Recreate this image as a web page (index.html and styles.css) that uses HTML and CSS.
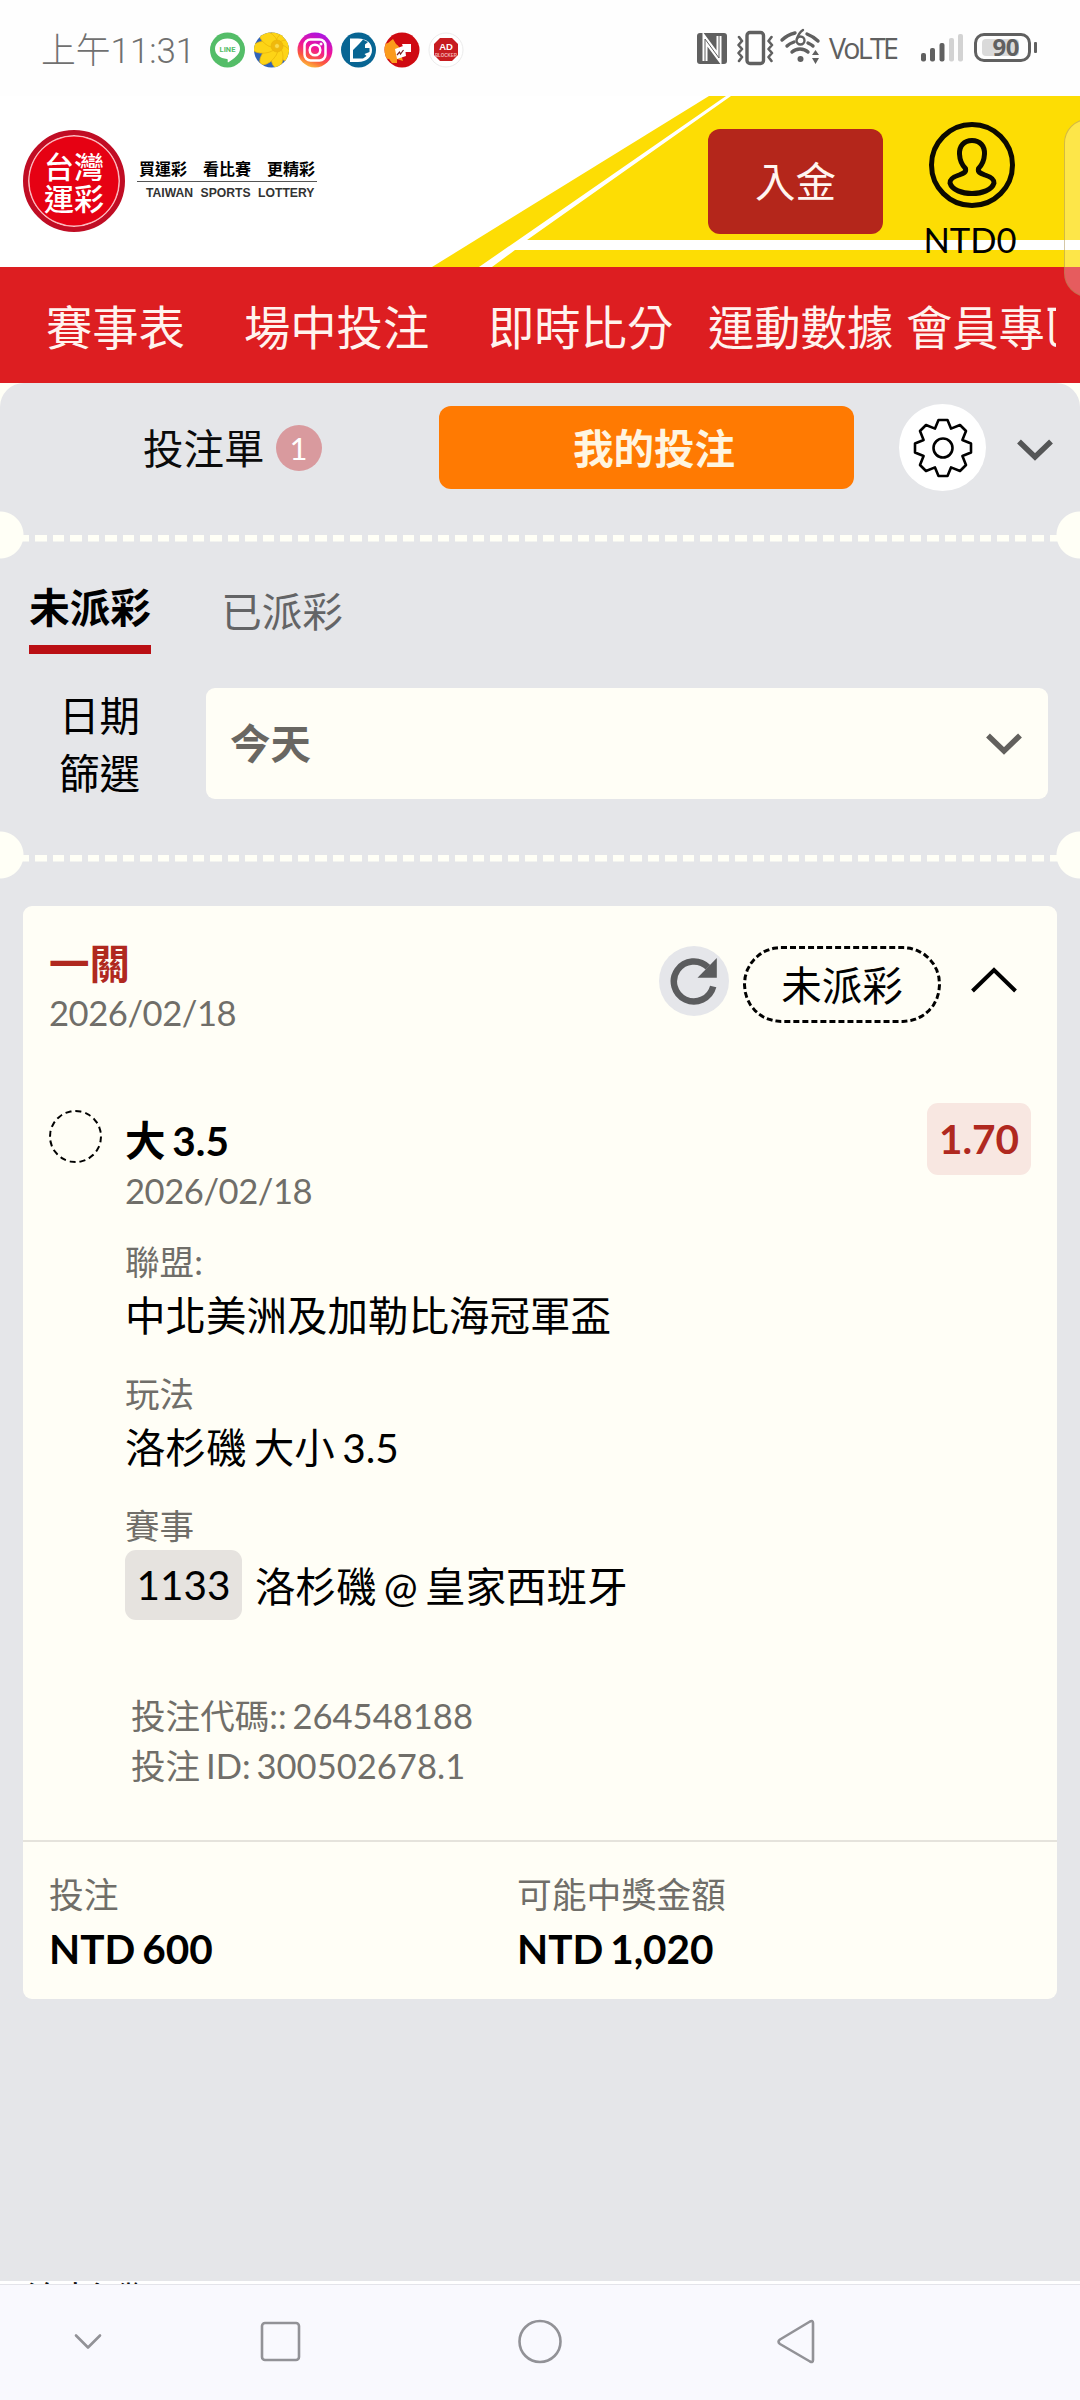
FILE: index.html
```html
<!DOCTYPE html>
<html lang="zh-Hant">
<head>
<meta charset="utf-8">
<title>台灣運彩</title>
<link rel="stylesheet" href="styles.css">
</head>
<body>
<div class="screen">
  <div class="status">
    <div class="clock">上午11:31</div>
    <svg class="apps" width="238" height="36" viewBox="0 0 238 36">
      <defs>
        <linearGradient id="ig" x1="0.7" y1="0" x2="0.3" y2="1"><stop offset="0" stop-color="#a516e8"/><stop offset=".45" stop-color="#f0149a"/><stop offset=".75" stop-color="#fb5a3c"/><stop offset="1" stop-color="#fdc43a"/></linearGradient>
        <clipPath id="c2"><circle cx="61.500" cy="18" r="17.500"/></clipPath>
        <clipPath id="c5"><circle cx="192" cy="18" r="17.500"/></clipPath>
      </defs>
      <circle cx="17.500" cy="18" r="17.500" fill="#54bd68"/>
      <path d="M17.500 6.500c7 0 12.500 4.500 12.500 10.200 0 5.500-6 10-12 13.800-.8-1.500.5-3.200-1-3.600C10 26.400 5 22.300 5 16.700 5 11 10.500 6.500 17.500 6.500z" fill="#fff"/>
      <text class="line-label" x="17.500" y="19.800" text-anchor="middle">LINE</text>
      <g clip-path="url(#c2)">
        <rect x="43" width="37" height="36" fill="#3263b8"/>
        <g fill="#fdd416" stroke="#e9b50c" stroke-width=".7" transform="translate(67 14)">
          <ellipse cx="0" cy="-10" rx="6" ry="10"/><ellipse cx="0" cy="-10" rx="6" ry="10" transform="rotate(45)"/><ellipse cx="0" cy="-10" rx="6" ry="10" transform="rotate(90)"/><ellipse cx="0" cy="-10" rx="6" ry="10" transform="rotate(135)"/><ellipse cx="0" cy="-11" rx="6" ry="11" transform="rotate(180)"/><ellipse cx="0" cy="-12" rx="6" ry="12" transform="rotate(222)"/><ellipse cx="0" cy="-13" rx="6" ry="12" transform="rotate(265)"/><ellipse cx="0" cy="-11" rx="6" ry="11" transform="rotate(310)"/>
          <circle r="6" fill="#f0b90c"/><circle r="2.500" fill="#fadb50"/>
        </g>
      </g>
      <circle cx="105" cy="18" r="17.500" fill="url(#ig)"/>
      <g fill="none" stroke="#fff" stroke-width="2.500"><rect x="94.500" y="7.500" width="21" height="21" rx="6"/><circle cx="105" cy="18" r="5.300"/></g>
      <circle cx="111" cy="12" r="1.500" fill="#fff"/>
      <circle cx="148.500" cy="18" r="17.500" fill="#086593"/>
      <path fill-rule="evenodd" d="M140 6.500h8c9 0 14 5 14 11.500s-5 12-14 12h-8zM143 18v8.500h10l3.500-2.500-2-2 5-2v-4h-4.500v-3.500l3-2.500-5-2.500-4 4.500z" fill="#fff"/>
      <circle cx="192" cy="18" r="17.500" fill="#cf0a12"/>
      <g clip-path="url(#c5)">
        <path d="M174 12l4-1 5-4 3 5c3 2 4 4 4 7l3 10-6-2v4h-5l-3-4-6-1z" fill="#fb9b1c"/>
        <path d="M185 17l8-3 2 2 1 8-9 3zM192 12h9v8h-6z" fill="#fff"/>
        <path d="M187 23l2.500-3 1 2 3-4" stroke="#722" fill="none" stroke-width="1.200"/>
      </g>
    </svg>
    <svg class="adicon" width="36" height="36" viewBox="0 0 36 36">
      <circle cx="18" cy="18" r="17" fill="#fff" stroke="#ececec" stroke-width="1"/>
      <path d="M12 6h12l6 6v11l-6 6H12l-6-6V12z" fill="#c71c20"/>
      <text class="ad-label" x="18" y="18" text-anchor="middle">AD</text>
      <text class="ad-sub" x="18" y="25" text-anchor="middle">BLOCKER</text>
    </svg>
    <svg class="sysicons" width="128" height="40" viewBox="0 0 128 40">
      <rect x="1" y="5" width="30" height="31" rx="3" fill="#606060"/>
      <path d="M9 33V11l14 19V8" stroke="#fff" stroke-width="5" fill="none"/>
      <path d="M9 33V11l14 19V8" stroke="#606060" stroke-width="1" fill="none"/>
      <g fill="none" stroke="#606060" stroke-width="3.400" stroke-linecap="round" stroke-linejoin="round">
        <rect x="51" y="4.500" width="16.500" height="31" rx="3"/>
        <path stroke-width="2.600" d="M43 9l3 4-3.500 4 3.500 4-3.500 4 3.500 4-3 4M75.500 9l-3 4 3.500 4-3.500 4 3.500 4-3.500 4 3 4"/>
        <path d="M86 12c4-4 9-6 13-7M111 6c5 2 8 4 11 7M91 18c2-2 4-3 7-4M112 15c2 1 4 2 5 3M96 24c4-4 12-4 16 0"/>
        <path stroke-width="2.400" d="M107 2c-3 2-5 5-6 9"/><circle cx="104.500" cy="12.500" r="4" stroke-width="2.400"/>
      </g>
      <circle cx="104.500" cy="31" r="3" fill="#606060"/>
      <path d="M116 27l3.500-5 3.500 5zM116 30h7l-3.500 6z" fill="#606060"/>
    </svg>
    <div class="volte">VoLTE</div>
    <svg class="signal" width="44" height="30" viewBox="0 0 44 30">
      <g fill="#606060"><rect x="0" y="20" width="5" height="8.500" rx="2"/><rect x="9" y="15" width="5" height="13.500" rx="2"/><rect x="18.500" y="10" width="5" height="18.500" rx="2"/></g>
      <g fill="#d3d3d3"><rect x="28" y="5" width="5" height="23.500" rx="2"/><rect x="37" y="1" width="5" height="27.500" rx="2"/></g>
    </svg>
    <div class="battery"><span>90</span></div>
    <i class="battery-cap"></i>
  </div>

  <header class="header">
    <svg class="stripes" width="660" height="171" viewBox="0 0 660 171">
      <path d="M12 171L289 0H660V171z" fill="#fddd04"/>
      <path d="M59 171L306 0h5L107 144H660v10H95L72 171z" fill="#fff"/>
    </svg>
    <div class="brand">
      <div class="seal"><span>台灣</span><span>運彩</span></div>
      <div class="tagline">
        <div class="slogan"><span>買運彩</span><span>看比賽</span><span>更精彩</span></div>
        <div class="english">TAIWAN SPORTS LOTTERY</div>
      </div>
    </div>
    <button class="deposit">入金</button>
    <div class="account">
      <svg width="90" height="90" viewBox="-45 -45 90 90" fill="none" stroke="#0c0a00" stroke-width="5">
        <circle r="40.500"/>
        <path stroke-linejoin="round" d="M0-24.500C8-24.500 12.800-19 12.500-11 12.200-4 10 0 6.500 3.500 5.500 7.500 9 8.500 13 10 19 12 22.500 14.500 22 18 20 25 10 28.500 0 28.500S-20 25-22 18C-22.500 14.500-19 12-13 10-9 8.500-5.500 7.500-6.500 3.500-10 0-12.200-4-12.500-11-12.800-19-8-24.500 0-24.500z"/>
      </svg>
      <div class="balance">NTD0</div>
    </div>
  </header>

  <nav class="nav">
    <span class="w198">賽事表</span><span class="w244">場中投注</span><span class="w220">即時比分</span><span class="w198">運動數據</span><span>會員專區</span>
  </nav>
  <i class="edge-handle"></i>

  <main class="panel-wrap">
    <div class="panel">
      <div class="topbar">
        <div class="slip">投注單<b class="badge">1</b></div>
        <button class="mine">我的投注</button>
        <div class="gear">
          <svg width="62" height="62" viewBox="-31 -31 62 62" fill="none" stroke="#000" stroke-width="2.600" stroke-linejoin="round">
            <path d="M-4.500-28H4.500L8-19.400 17-23 23-17 19.400-8 28-4.500V4.500L19.400 8 23 17 17 23 8 19.400 4.500 28H-4.500L-8 19.400-17 23-23 17-19.400 8-28 4.500V-4.500L-19.400-8-23-17-17-23-8-19.400z"/>
            <circle r="9.500"/>
          </svg>
        </div>
        <svg class="chev" width="36" height="22" viewBox="0 0 36 22"><path d="M2 2.500L18 18 34 2.500" fill="none" stroke="#555657" stroke-width="5.500"/></svg>
      </div>

      <div class="tear"></div>

      <div class="tabs"><span class="tab on">未派彩</span><span class="tab">已派彩</span></div>
      <div class="filter">
        <div class="filter-label">日期<br>篩選</div>
        <div class="select">今天
          <svg width="36" height="22" viewBox="0 0 36 22"><path d="M2 2.500L18 18 34 2.500" fill="none" stroke="#62605d" stroke-width="5.500"/></svg>
        </div>
      </div>

      <div class="tear"></div>

      <section class="card">
        <div class="card-head">
          <div class="card-title"><strong>一關</strong><span class="date">2026/02/18</span></div>
          <div class="refresh">
            <svg width="48" height="48" viewBox="0 0 48 48"><path d="M43.200 29.500A20 20 0 1 1 38 10.300" fill="none" stroke="#5b5c5e" stroke-width="6.500"/><path d="M46.800 1V20.700H27.500z" fill="#5b5c5e"/></svg>
          </div>
          <div class="pill">未派彩</div>
          <svg class="chev-up" width="46" height="26" viewBox="0 0 46 26"><path d="M1.500 24L23 3 44.500 24" fill="none" stroke="#000" stroke-width="4"/></svg>
        </div>

        <div class="pick">
          <i class="ring"></i>
          <div class="detail">
            <strong class="pick-name">大 3.5</strong>
            <div class="date">2026/02/18</div>
            <div class="label first">聯盟:</div>
            <div class="value">中北美洲及加勒比海冠軍盃</div>
            <div class="label">玩法</div>
            <div class="value">洛杉磯 大小 3.5</div>
            <div class="label">賽事</div>
            <div class="match"><span class="code">1133</span><span class="teams">洛杉磯 @ 皇家西班牙</span></div>
            <div class="ids">投注代碼:: 264548188<br>投注 ID: 300502678.1</div>
          </div>
          <div class="odds">1.70</div>
        </div>

        <div class="totals">
          <div class="stake"><div class="sum-label">投注</div><div class="sum">NTD 600</div></div>
          <div><div class="sum-label">可能中獎金額</div><div class="sum">NTD 1,020</div></div>
        </div>
      </section>
    </div>
  </main>

  <div class="peek"><span>洛杉磯</span></div>
  <footer class="sysnav">
    <svg width="1080" height="115" viewBox="0 1 1080 115" fill="none" stroke="#929297" stroke-width="2.600" stroke-linejoin="round" stroke-linecap="round">
      <path d="M76 51.500L88 63.500 100 51.500"/>
      <rect x="262" y="39" width="37" height="37" rx="3"/>
      <circle cx="540" cy="57.500" r="20.500"/>
      <path d="M780 55.500L810 37.500Q813 36 813 39V76Q813 79 810 77.500L780 60Q777 57.800 780 55.500z"/>
    </svg>
  </footer>
</div>
</body>
</html>
```
FILE: styles.css
```css
* { box-sizing: border-box; }
body { margin: 0; background: #fff; }
.screen {
  position: relative;
  width: 1080px;
  height: 2400px;
  overflow: hidden;
  display: flex;
  flex-direction: column;
  font-family: Lato, "Noto Sans CJK TC", sans-serif;
  font-size: 40.5px;
  word-spacing: -3px;
  color: #000;
}
button { border: 0; padding: 0; font: inherit; }
svg { display: block; flex: none; }

/* status bar */
.status { height: 96px; display: flex; padding-left: 41px; background: #fefefe; color: #707070; }
.clock { width: 169px; margin-top: 27px; font: 300 34.8px/48px Roboto, "Noto Sans CJK TC", sans-serif; white-space: nowrap; }
.apps { margin-top: 32px; margin-right: -20px; }
.line-label { font: bold 7.5px Roboto, sans-serif; fill: #54bd68; }
.adicon { margin-top: 32px; }
.ad-label { font: bold 9.5px "Liberation Sans", sans-serif; fill: #fff; }
.ad-sub { font: bold 4.5px "Liberation Sans", sans-serif; fill: #f3b5b5; }
.sysicons { margin: 28px 0 0 232px; }
.volte { margin: 31px 0 0 5px; width: 92px; font: 500 28.5px/34px "Open Sans", sans-serif; letter-spacing: -2.7px; color: #606060; }
.signal { margin-top: 33px; }
.battery { margin: 33px 0 0 9px; width: 57px; height: 29px; border: 3px solid #606060; border-radius: 10px; padding: 3px 9px 3px 5px; display: flex; }
.battery span { flex: 1; background: #dadada; border-radius: 4px; font: bold 24px/16px "Noto Sans", sans-serif; letter-spacing: -0.5px; text-align: right; color: #606060; }
.battery-cap { width: 3px; height: 11px; margin: 42px 0 0 3px; background: #606060; border-radius: 1px; }

/* brand header */
.header { position: relative; height: 171px; display: flex; padding-left: 23px; }
.stripes { position: absolute; right: 0; top: 0; }
.brand { display: flex; width: 685px; }
.seal {
  width: 102px; height: 102px; margin-top: 34px; border-radius: 50%;
  background: #e60113; border: 5px solid #c00d24; box-shadow: inset 0 0 0 1.5px #f9b9be;
  color: #fff; font: 500 30px/32px "Noto Sans CJK TC", sans-serif; text-align: center;
  display: flex; flex-direction: column; justify-content: center;
}
.seal span { display: block; }
.tagline { margin: 60px 0 0 12px; width: 180px; }
.slogan { height: 26px; border-bottom: 1.5px solid #555; display: flex; justify-content: space-between; padding: 0 2px; font: bold 16px/24px "Noto Sans CJK TC", sans-serif; }
.english { font: bold 12.2px/14px "Liberation Sans", sans-serif; padding-left: 9px; margin-top: 4px; word-spacing: 4px; white-space: nowrap; color: #333; }
.deposit { position: relative; width: 175px; height: 105px; margin-top: 33px; border-radius: 12px; background: #b4261b; color: #fff5f0; line-height: 103px; }
.account { position: relative; width: 120px; margin-left: 29px; display: flex; flex-direction: column; align-items: center; }
.account svg { margin-top: 24px; }
.balance { font-size: 34.6px; line-height: 42px; margin-top: 9px; margin-left: -4px; }

.nav { height: 116px; background: #dd1e21; color: #fff3ee; display: flex; padding-left: 46px; font-size: 46.3px; line-height: 121px; overflow: hidden; border-right: 24px solid #dd1e21; white-space: nowrap; }
.nav span { flex: none; }
.w198 { width: 198px; }
.w244 { width: 244px; }
.w220 { width: 220px; }
.edge-handle { position: absolute; right: -40px; top: 119px; width: 56px; height: 178px; border-radius: 24px; background: rgba(255,255,255,.28); border: 1.5px solid rgba(160,130,60,.45); }

/* betting panel */
.panel-wrap { height: 1898px; background: #fffff6; }
.panel { height: 1898px; background: #e5e6e9; border-radius: 24px 24px 0 0; overflow: hidden; }
.topbar { height: 128px; display: flex; padding: 23px 0 0 143px; }
.slip { display: flex; width: 296px; line-height: 86px; color: #0b0b0b; }
.badge { width: 46px; height: 46px; margin: 19px 0 0 11px; border-radius: 50%; background: #d99a9e; color: #fff; font-size: 31px; font-weight: 400; line-height: 46px; text-align: center; }
.mine { width: 415px; height: 83px; border-radius: 12px; background: #ff7a02; color: #fff5e0; font-weight: 700; line-height: 86px; padding-left: 15px; }
.gear { width: 87px; height: 87px; margin: -2px 0 0 45px; border-radius: 50%; background: #fff; display: flex; align-items: center; justify-content: center; }
.chev { margin: 33px 0 0 31px; }

/* perforated divider with half-round notches */
.tear {
  height: 48px;
  background:
    radial-gradient(circle at 0 50%, #fffff6 23px, transparent 24px),
    radial-gradient(circle at 100% 50%, #fffff6 23px, transparent 24px),
    repeating-linear-gradient(90deg, #fffff6 0 11.5px, transparent 11.5px 17.49px) 17.5px 23.5px / 1045px 6.5px no-repeat;
}
.tabs { height: 118px; display: flex; padding: 16px 0 0 29px; }
.tab { width: 122px; height: 79px; margin-right: 71px; line-height: 74px; text-align: center; color: #636466; }
.tab:last-child { margin-left: -1px; }
.on { color: #000; font-weight: 700; border-bottom: 9px solid #ba0f14; line-height: 65px; }
.filter { height: 154px; display: flex; padding: 11px 32px 0 29px; }
.filter-label { width: 177px; line-height: 58px; padding-left: 30px; margin-top: -1px; }
.select { width: 842px; height: 111px; border-radius: 9px; background: #fffef6; color: #696762; font-weight: 700; line-height: 115px; padding: 0 26px 0 24px; display: flex; align-items: center; justify-content: space-between; }

/* bet card */
.card { width: 1034px; margin: 27px 0 0 23px; height: 1093px; border-radius: 9px; background: #fffef6; }
.card-head { display: flex; height: 132px; padding: 40px 40px 0 26px; }
.card-title { margin-top: -7px; width: 610px; display: flex; flex-direction: column; line-height: 50px; color: #b0291f; }
.date { font-size: 34.6px; line-height: 48px; letter-spacing: -0.45px; color: #706e69; }
.refresh { width: 70px; height: 70px; border-radius: 50%; background: #e5e6ea; padding: 11px; }
.pill { width: 198px; height: 77px; margin-left: 14px; border: 3px dashed #000; border-radius: 38px; line-height: 73px; text-align: center; }
.chev-up { margin: 21px 0 0 30px; }
.pick { display: flex; margin-top: 65px; padding: 0 26px; height: 737px; }
.ring { width: 53px; height: 53px; margin: 7px 1px 0 0; border: 2.6px dashed #000; border-radius: 50%; }
.detail { width: 824px; padding: 13px 0 0 22px; }
.pick-name { display: block; line-height: 50px; margin-bottom: 1px; }
.label { margin-top: 24px; font-size: 34.6px; line-height: 50px; color: #706e69; }
.first { margin-top: 22px; }
.value { line-height: 58px; }
.match { display: flex; margin-top: -1px; line-height: 70px; }
.code { width: 117px; height: 70px; border-radius: 11px; background: #e6e3df; text-align: center; }
.teams { margin-left: 13px; padding-top: 2px; }
.ids { margin: 69px 0 0 6px; font-size: 34.6px; line-height: 50px; color: #706e69; }
.odds { width: 104px; height: 72px; border-radius: 11px; background: #f8e7e1; color: #b0291f; font-weight: 700; line-height: 72px; text-align: center; }
.totals { display: flex; border-top: 2.5px solid #e5e3dc; padding: 28px 26px 0; }
.stake { width: 468px; }
.sum-label { font-size: 34.8px; line-height: 50px; color: #706e69; }
.sum { font-weight: 700; line-height: 58px; }

/* content just above the system bar */
.peek { height: 3px; background: #fff; overflow: hidden; padding-left: 26px; }
.peek span { display: block; font-size: 39px; line-height: 38px; color: #111; }
.sysnav { height: 116px; background: #f9f9fe; border-top: 1px solid #e4e4ea; }
```
